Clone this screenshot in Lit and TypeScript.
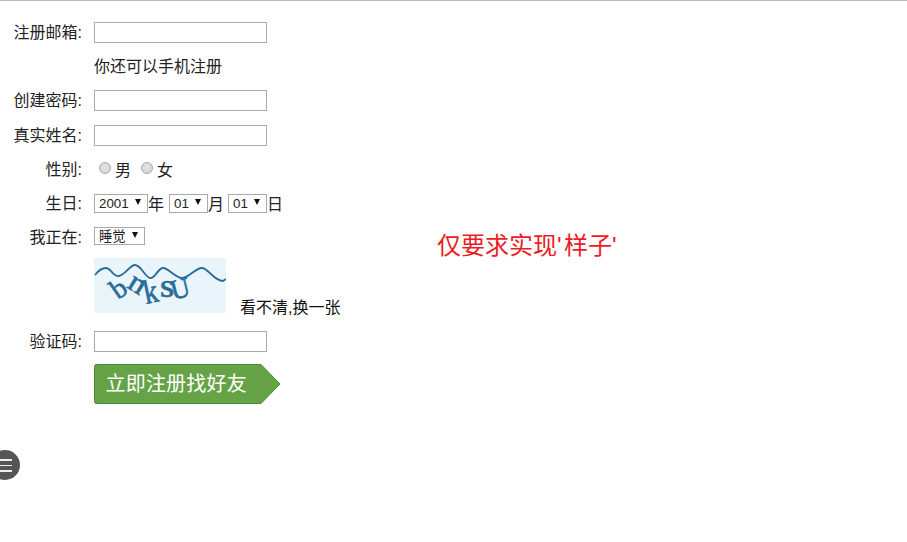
import { LitElement, html, css, svg } from "lit";
import { customElement } from "lit/decorators.js";

@customElement("app-root")
export class AppRoot extends LitElement {
  static styles = css`
    :host {
      display: block;
      position: relative;
      min-height: 542px;
      background: #fff;
      border-top: 1px solid #bbb;
      box-sizing: border-box;
      font-family: "Liberation Sans", "Noto Sans CJK SC", sans-serif;
      font-size: 16px;
      color: #222;
      overflow: hidden;
    }
    .form {
      display: grid;
      grid-template-columns: 82px 1fr;
      column-gap: 12px;
      padding-top: 21px;
      align-items: center;
    }
    .label { text-align: right; line-height: 21px; white-space: nowrap; }
    .field { display: flex; align-items: center; }
    .r-email { height: 21px; margin-bottom: 11px; }
    .r-hint { height: 21px; margin-bottom: 15px; }
    .r-pass { height: 21px; margin-bottom: 14px; }
    .r-name { height: 21px; margin-bottom: 13px; }
    .r-sex { height: 21px; margin-bottom: 13px; }
    .r-birth { height: 21px; margin-bottom: 13px; }
    .r-doing { height: 18px; margin-bottom: 13px; }
    .r-cap { height: 55px; margin-bottom: 18px; }
    .r-code { height: 21px; margin-bottom: 12px; }
    .r-btn { height: 40px; }
    .text-input {
      width: 173px;
      height: 21px;
      box-sizing: border-box;
      border: 1px solid #a9a9a9;
      background: #fff;
      padding: 0;
      margin: 0;
    }
    .radio {
      appearance: none;
      width: 12px;
      height: 12px;
      margin: 0 4px 3px 5px;
      border-radius: 50%;
      border: 1px solid #ababab;
      background: radial-gradient(circle at 50% 40%, #e6e6e6, #cfcfcf);
      box-sizing: border-box;
    }
    .radio + span { margin-right: 5px; margin-bottom: 2px; }
    .unit { margin-bottom: 2px; }
    select {
      appearance: none;
      height: 19px;
      box-sizing: border-box;
      border: 1px solid #a9a9a9;
      border-radius: 0;
      background: #fff;
      color: #222;
      font-family: "Liberation Sans", "Noto Sans CJK SC", sans-serif;
      font-size: 13.33px;
      padding: 0 0 0 4px;
      margin: 0;
    }
    .sel-wrap { position: relative; display: inline-flex; }
    .sel-wrap::after {
      content: "";
      position: absolute;
      right: 7px;
      top: 5px;
      border-left: 3.5px solid transparent;
      border-right: 3.5px solid transparent;
      border-top: 6px solid #111;
      pointer-events: none;
    }
    .year { width: 54px; }
    .day { width: 39px; }
    .doing { width: 51px; height: 18px; }
    .gap-a { margin-right: 5px; }
    .gap-b { margin-right: 4px; }
    .captcha { display: block; width: 132px; height: 55px; }
    .change { margin-left: 14px; align-self: flex-end; line-height: 16px; margin-bottom: -3px; color: #111; }
    .submit {
      position: relative;
      width: 187px;
      height: 40px;
      padding: 0;
      border: 0;
      background: none;
      display: block;
    }
    .submit svg { display: block; }
    .submit span {
      position: absolute;
      left: 11.5px;
      top: 0;
      line-height: 40px;
      font-family: "Liberation Sans", "Noto Sans CJK SC", sans-serif;
      font-size: 20px;
      letter-spacing: 0.2px;
      color: #fff;
      white-space: nowrap;
    }
    .notice {
      position: absolute;
      left: 437px;
      top: 229px;
      font-size: 24px;
      line-height: 32px;
      color: #ed1c24;
      white-space: nowrap;
    }
    .quote { letter-spacing: 2.4px; }
    .fab {
      position: absolute;
      left: -10px;
      top: 449px;
      width: 30px;
      height: 30px;
      border-radius: 50%;
      background: #555;
    }
    .fab i {
      position: absolute;
      left: 9px;
      width: 13px;
      height: 1.5px;
      background: #eee;
    }
    .fab i:nth-child(1) { top: 9px; }
    .fab i:nth-child(2) { top: 14.5px; }
    .fab i:nth-child(3) { top: 20px; }
  `;

  private captcha() {
    return svg`
      <rect width="132" height="55" fill="#e9f4fb"/>
      <g fill="#2a6c98" stroke="#2a6c98" stroke-width="0.6" font-family="Liberation Serif, serif" font-size="28">
        <text transform="translate(24 42) rotate(-35)">b</text>
        <text transform="translate(32 29) rotate(32) scale(1.15 1.05)">n</text>
        <text transform="translate(52 46) rotate(-12) scale(1 1.2)">k</text>
        <text transform="translate(66 39) scale(1.3 1.2)">s</text>
        <text transform="translate(79 42) rotate(-14) scale(0.95 1)">U</text>
      </g>
      <path d="M1 17 C4 13 8 10 12 10 C17 10 19 19 25 18 C31 17 36 7 41 7 C47 7 51 19 56 20 C61 21 64 10 69 10 C75 10 81 20 88 20 C95 20 101 10 108 10 C114 10 120 23 129 23 L132 21"
        fill="none" stroke="#2a6c98" stroke-width="1.8"/>
    `;
  }

  render() {
    return html`
      <div class="form">
        <div class="label r-email">注册邮箱:</div>
        <div class="field r-email"><input class="text-input" type="text" /></div>

        <div class="r-hint"></div>
        <div class="field r-hint">你还可以手机注册</div>

        <div class="label r-pass">创建密码:</div>
        <div class="field r-pass"><input class="text-input" type="text" /></div>

        <div class="label r-name">真实姓名:</div>
        <div class="field r-name"><input class="text-input" type="text" /></div>

        <div class="label r-sex">性别:</div>
        <div class="field r-sex">
          <input class="radio" type="radio" name="sex" /><span>男</span>
          <input class="radio" type="radio" name="sex" /><span>女</span>
        </div>

        <div class="label r-birth">生日:</div>
        <div class="field r-birth">
          <span class="sel-wrap"><select class="year"><option>2001</option></select></span><span class="unit gap-a">年</span>
          <span class="sel-wrap"><select class="day"><option>01</option></select></span><span class="unit gap-b">月</span>
          <span class="sel-wrap"><select class="day"><option>01</option></select></span><span class="unit">日</span>
        </div>

        <div class="label r-doing">我正在:</div>
        <div class="field r-doing">
          <span class="sel-wrap"><select class="doing"><option>睡觉</option></select></span>
        </div>

        <div class="r-cap"></div>
        <div class="field r-cap">
          <svg class="captcha" viewBox="0 0 132 55">${this.captcha()}</svg>
          <span class="change">看不清,换一张</span>
        </div>

        <div class="label r-code">验证码:</div>
        <div class="field r-code"><input class="text-input" type="text" /></div>

        <div class="r-btn"></div>
        <div class="field r-btn">
          <button class="submit" type="button">
            <svg width="187" height="40" viewBox="0 0 187 40">
              <path d="M2.5 .5 H167 L186 20 L167 39.5 H2.5 Q.5 39.5 .5 37.5 V2.5 Q.5 .5 2.5 .5 Z"
                fill="#65a346" stroke="#4d8a34"/>
            </svg>
            <span>立即注册找好友</span>
          </button>
        </div>
      </div>
      <div class="notice">仅要求实现<span class="quote">'</span>样子<span class="quote">'</span></div>
      <div class="fab"><i></i><i></i><i></i></div>
    `;
  }
}
